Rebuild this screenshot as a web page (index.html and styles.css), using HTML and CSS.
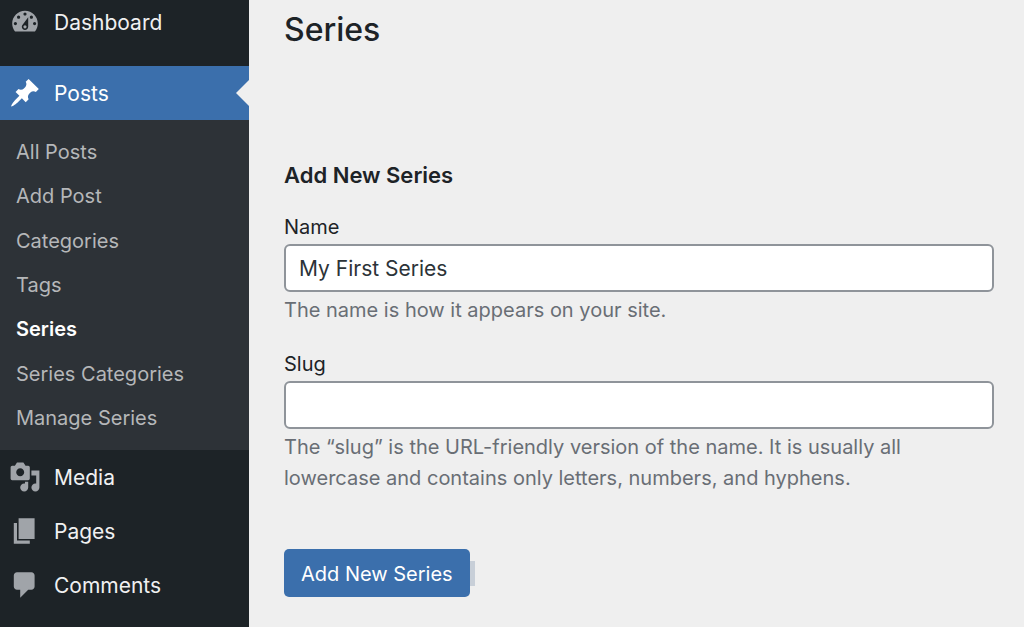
FILE: index.html
```html
<!DOCTYPE html>
<html lang="en">
<head>
<meta charset="utf-8">
<meta name="viewport" content="width=device-width, initial-scale=1">
<title>Series</title>
<link rel="stylesheet" href="styles.css">
</head>
<body>
<div class="admin">
  <nav class="sidebar" aria-label="Main menu">
    <a class="menu-item menu-item-first" href="#">
      <svg class="icon" viewBox="0 0 20 20" aria-hidden="true"><path fill-rule="evenodd" d="M3.76 16h12.48c1.1-1.37 1.76-3.11 1.76-5 0-4.42-3.58-8-8-8s-8 3.58-8 8c0 1.89.66 3.63 1.76 5zM10 4c.55 0 1 .45 1 1s-.45 1-1 1-1-.45-1-1 .45-1 1-1zM6 6c.55 0 1 .45 1 1s-.45 1-1 1-1-.45-1-1 .45-1 1-1zm8 0c.55 0 1 .45 1 1s-.45 1-1 1-1-.45-1-1 .45-1 1-1zm-5.37 5.55L12 7v6c0 1.1-.9 2-2 2s-2-.9-2-2c0-.57.24-1.08.63-1.45zM4 10c.55 0 1 .45 1 1s-.45 1-1 1-1-.45-1-1 .45-1 1-1zm12 0c.55 0 1 .45 1 1s-.45 1-1 1-1-.45-1-1 .45-1 1-1zm-6 4c.55 0 1-.45 1-1s-.45-1-1-1-1 .45-1 1 .45 1 1 1z"/></svg>
      <span class="menu-text">Dashboard</span>
    </a>
    <a class="menu-item menu-item-current" href="#">
      <svg class="icon" viewBox="0 0 20 20" aria-hidden="true"><path d="M10.44 3.02l1.82-1.82 6.36 6.35-1.83 1.82c-1.05-.68-2.48-.57-3.41.36l-.75.75c-.92.93-1.04 2.35-.35 3.41l-1.83 1.82-2.41-2.41-2.8 2.79c-.42.42-3.38 2.71-3.8 2.29s1.86-3.39 2.28-3.81l2.79-2.79L4.1 9.36l1.83-1.82c1.05.69 2.48.57 3.4-.36l.75-.75c.93-.92 1.05-2.35.36-3.41z"/></svg>
      <span class="menu-text">Posts</span>
    </a>
    <div class="submenu">
      <a class="submenu-item" href="#">All Posts</a>
      <a class="submenu-item" href="#">Add Post</a>
      <a class="submenu-item" href="#">Categories</a>
      <a class="submenu-item" href="#">Tags</a>
      <a class="submenu-item submenu-item-current" href="#" aria-current="page">Series</a>
      <a class="submenu-item" href="#">Series Categories</a>
      <a class="submenu-item" href="#">Manage Series</a>
    </div>
    <a class="menu-item" href="#">
      <svg class="icon" viewBox="0 0 20 20" aria-hidden="true"><path fill-rule="evenodd" d="M13 11V4c0-.55-.45-1-1-1h-1.67L9 1H5L3.67 3H2c-.55 0-1 .45-1 1v7c0 .55.45 1 1 1h10c.55 0 1-.45 1-1zM7 4.5c1.38 0 2.5 1.12 2.5 2.5S8.38 9.5 7 9.5 4.5 8.38 4.5 7 5.62 4.5 7 4.5zM14 6h5v10.5c0 1.38-1.12 2.5-2.5 2.5S14 17.88 14 16.5s1.12-2.5 2.5-2.5c.17 0 .34.02.5.05V9h-3V6zm-4 8.05V13h2v3.5c0 1.38-1.12 2.5-2.5 2.5S7 17.88 7 16.5 8.12 14 9.5 14c.17 0 .34.02.5.05z"/></svg>
      <span class="menu-text">Media</span>
    </a>
    <a class="menu-item" href="#">
      <svg class="icon" viewBox="0 0 20 20" aria-hidden="true"><path d="M6 15V2h10v13H6zm-1 1h8v2H3V5h2v11z"/></svg>
      <span class="menu-text">Pages</span>
    </a>
    <a class="menu-item" href="#">
      <svg class="icon" viewBox="0 0 20 20" aria-hidden="true"><path d="M5 2h9c1.1 0 2 .9 2 2v7c0 1.1-.9 2-2 2h-2l-5 5v-5H5c-1.1 0-2-.9-2-2V4c0-1.1.9-2 2-2z"/></svg>
      <span class="menu-text">Comments</span>
    </a>
  </nav>
  <main class="content">
    <h1 class="page-title">Series</h1>
    <form class="series-form">
      <h2 class="form-title">Add New Series</h2>
      <div class="field">
        <label class="label" for="series-name">Name</label>
        <input class="input" id="series-name" type="text" value="My First Series" aria-describedby="name-help">
        <p class="help" id="name-help">The name is how it appears on your site.</p>
      </div>
      <div class="field">
        <label class="label" for="series-slug">Slug</label>
        <input class="input" id="series-slug" type="text" aria-describedby="slug-help">
        <p class="help" id="slug-help">The “slug” is the URL-friendly version of the name. It is usually all lowercase and contains only letters, numbers, and hyphens.</p>
      </div>
      <div class="actions">
        <button class="button" type="button">Add New Series</button>
        <span class="marker"></span>
      </div>
    </form>
  </main>
</div>
</body>
</html>
```
FILE: styles.css
```css
* {
  box-sizing: border-box;
}

body {
  margin: 0;
  background: #efefef;
  color: #1d2327;
  font-family: Inter, "Liberation Sans", sans-serif;
  font-size: 20px;
}

.admin {
  display: flex;
  min-height: 100vh;
}

.sidebar {
  flex: none;
  width: 249px;
  background: #1d2327;
}

.menu-item {
  position: relative;
  display: flex;
  align-items: center;
  gap: 13px;
  padding: 11px 9px;
  color: #f0f0f1;
  font-size: 21px;
  line-height: 30px;
  text-decoration: none;
}

.menu-text {
  padding-top: 2px;
}

.menu-item-first {
  padding-top: 6px;
  margin-bottom: 17px;
}

.menu-item-current {
  background: #3b6fac;
  color: #fff;
}

.menu-item-current::after {
  content: "";
  position: absolute;
  top: 14px;
  right: 0;
  border: solid transparent;
  border-width: 13px 13px 13px 0;
  border-right-color: #efefef;
}

.icon {
  flex: none;
  width: 32px;
  height: 32px;
  fill: #a0a4a9;
}

.menu-item-current .icon {
  fill: #fff;
}

.submenu {
  display: grid;
  grid-auto-rows: 1fr;
  align-items: center;
  min-height: 330px;
  padding: 10px 16px;
  background: #2d3237;
}

.submenu-item {
  color: #b5b7b9;
  line-height: 28px;
  text-decoration: none;
}

.submenu-item-current {
  color: #fff;
  font-weight: 600;
}

.content {
  flex: 1;
  min-width: 0;
  padding: 8px 30px 30px 35px;
}

.page-title {
  margin: 0 0 107px;
  font-size: 32px;
  font-weight: 500;
  line-height: 44px;
}

.form-title {
  margin: 0 0 21px;
  font-size: 22px;
  font-weight: 600;
  line-height: 32px;
}

.field {
  margin-bottom: 23px;
}

.label {
  display: block;
  margin-bottom: 2px;
  line-height: 30px;
}

.input {
  display: block;
  width: 100%;
  height: 48px;
  padding: 1px 13px 0;
  border: 2px solid #8f949a;
  border-radius: 6px;
  background: #fff;
  color: #2c3338;
  font: inherit;
  font-size: 21px;
}

.help {
  margin: 3px 0 0;
  color: #696e75;
  line-height: 31px;
}

.actions {
  display: flex;
  align-items: center;
  margin-top: 55px;
}

.button {
  height: 48px;
  padding: 1px 17px 0;
  border: 0;
  border-radius: 5px;
  background: #3b6fac;
  color: #fff;
  font: inherit;
}

.marker {
  width: 5px;
  height: 25px;
  background: #c8cfd8;
}
```
